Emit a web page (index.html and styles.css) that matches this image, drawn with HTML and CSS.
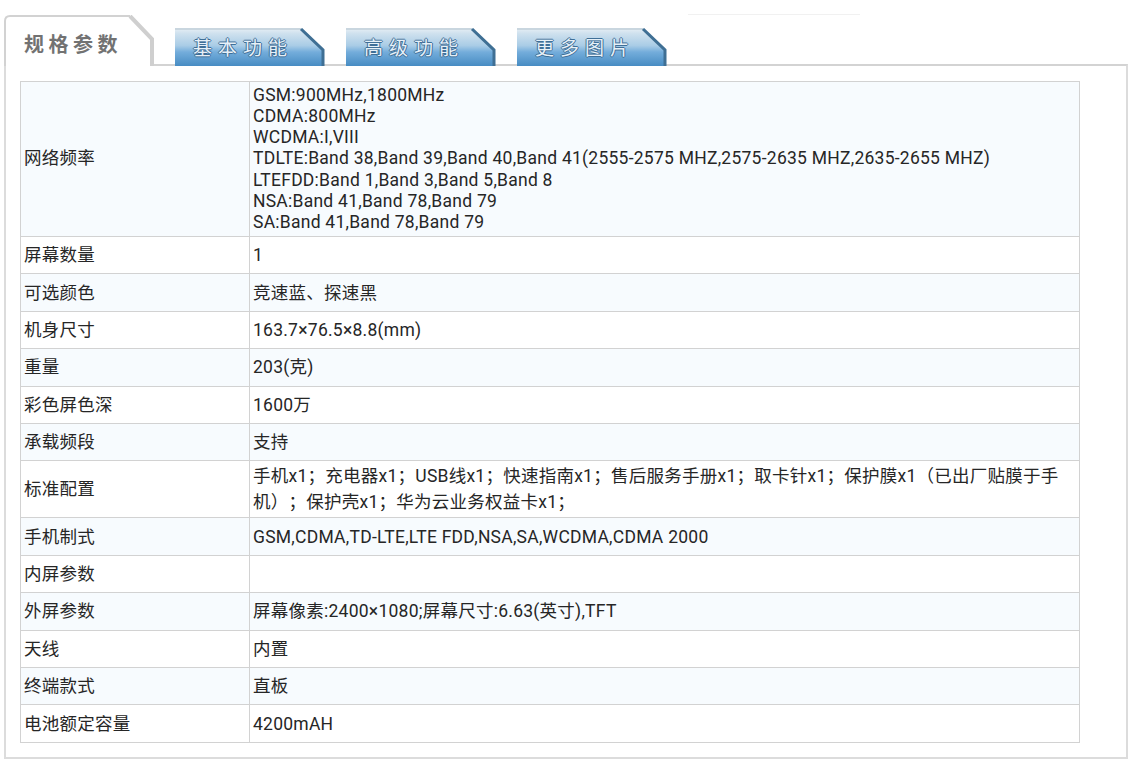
FILE: index.html
```html
<!DOCTYPE html>
<html lang="zh-CN">
<head>
<meta charset="utf-8">
<title>规格参数</title>
<link rel="stylesheet" href="styles.css">
</head>
<body>
<div class="wrap">
  <div class="tabs">
    <div class="tab tab-active">
      <svg class="tab-bg" width="151" height="51" viewBox="0 0 151 51">
        <path d="M1,51 L1,6 Q1,1 6,1 L126,1 L149,25 L149,51 Z" fill="#fff"/>
        <path d="M1,51 L1,6 Q1,1 6,1 L126,1" fill="none" stroke="#d2d2d2" stroke-width="2"/>
        <path d="M126,1 L148,24 L148,51" fill="none" stroke="#cfcfcf" stroke-width="4"/>
      </svg>
      <span class="tab-label">规格参数</span>
    </div>
    <div class="tab">
      <svg class="tab-bg" width="151" height="38" viewBox="0 0 151 38">
        <defs>
          <linearGradient id="tg1" x1="0" y1="0" x2="0" y2="1">
            <stop offset="0" stop-color="#e3edf4"/>
            <stop offset="0.12" stop-color="#cfe1ee"/>
            <stop offset="0.45" stop-color="#a9cce6"/>
            <stop offset="0.62" stop-color="#74addb"/>
            <stop offset="1" stop-color="#478cc3"/>
          </linearGradient>
        </defs>
        <path d="M0,38 L0,1 L126,1 L149,23 L149,38 Z" fill="url(#tg1)"/>
        <path d="M0,1 L126,1" stroke="#c9d6df" stroke-width="2"/>
        <path d="M126,1 L148,22 L148,38" fill="none" stroke="#3f6f94" stroke-width="3"/>
      </svg>
      <span class="tab-label">基本功能</span>
    </div>
    <div class="tab">
      <svg class="tab-bg" width="151" height="38" viewBox="0 0 151 38">
        <path d="M0,38 L0,1 L126,1 L149,23 L149,38 Z" fill="url(#tg1)"/>
        <path d="M0,1 L126,1" stroke="#c9d6df" stroke-width="2"/>
        <path d="M126,1 L148,22 L148,38" fill="none" stroke="#3f6f94" stroke-width="3"/>
      </svg>
      <span class="tab-label">高级功能</span>
    </div>
    <div class="tab">
      <svg class="tab-bg" width="151" height="38" viewBox="0 0 151 38">
        <path d="M0,38 L0,1 L126,1 L149,23 L149,38 Z" fill="url(#tg1)"/>
        <path d="M0,1 L126,1" stroke="#c9d6df" stroke-width="2"/>
        <path d="M126,1 L148,22 L148,38" fill="none" stroke="#3f6f94" stroke-width="3"/>
      </svg>
      <span class="tab-label">更多图片</span>
    </div>
    <div class="topline"></div>
  </div>
  <div class="panel">
    <table class="spec">
      <colgroup><col class="col-name"><col class="col-val"></colgroup>
      <tr class="odd multi"><td>网络频率</td><td>GSM:900MHz,1800MHz<br>CDMA:800MHz<br>WCDMA:I,VIII<br>TDLTE:Band 38,Band 39,Band 40,Band 41(2555-2575 MHZ,2575-2635 MHZ,2635-2655 MHZ)<br>LTEFDD:Band 1,Band 3,Band 5,Band 8<br>NSA:Band 41,Band 78,Band 79<br>SA:Band 41,Band 78,Band 79</td></tr>
      <tr><td>屏幕数量</td><td>1</td></tr>
      <tr class="odd"><td>可选颜色</td><td>竞速蓝、探速黑</td></tr>
      <tr><td>机身尺寸</td><td>163.7×76.5×8.8(mm)</td></tr>
      <tr class="odd"><td>重量</td><td>203(克)</td></tr>
      <tr><td>彩色屏色深</td><td>1600万</td></tr>
      <tr class="odd"><td>承载频段</td><td>支持</td></tr>
      <tr class="double"><td>标准配置</td><td>手机x1；充电器x1；USB线x1；快速指南x1；售后服务手册x1；取卡针x1；保护膜x1（已出厂贴膜于手机）；保护壳x1；华为云业务权益卡x1；</td></tr>
      <tr class="odd"><td>手机制式</td><td>GSM,CDMA,TD-LTE,LTE FDD,NSA,SA,WCDMA,CDMA 2000</td></tr>
      <tr><td>内屏参数</td><td></td></tr>
      <tr class="odd"><td>外屏参数</td><td>屏幕像素:2400×1080;屏幕尺寸:6.63(英寸),TFT</td></tr>
      <tr><td>天线</td><td>内置</td></tr>
      <tr class="odd"><td>终端款式</td><td>直板</td></tr>
      <tr><td>电池额定容量</td><td>4200mAH</td></tr>
    </table>
  </div>
</div>
</body>
</html>
```
FILE: styles.css
```css
html, body {
  margin: 0;
  padding: 0;
  background: #ffffff;
}

.wrap {
  margin: 15px 0 0 4px;
  width: 1124px;
}

.tabs {
  display: flex;
  align-items: flex-end;
  gap: 20px;
  height: 51px;
  margin-bottom: -2px;
  position: relative;
  z-index: 1;
}

.tab {
  position: relative;
  width: 151px;
  height: 38px;
  display: flex;
  align-items: center;
  padding-left: 18px;
  box-sizing: border-box;
}

.tab-active {
  height: 51px;
  padding-left: 20px;
  padding-top: 6px;
}

.tab-bg {
  position: absolute;
  left: 0;
  top: 0;
}

.tab-label {
  position: relative;
  font-family: "Noto Sans CJK SC", sans-serif;
  font-size: 19px;
  letter-spacing: 6px;
  color: #e6f0f8;
  text-shadow: 1px 0 0 #3f6f97, -1px 0 0 #3f6f97, 0 1px 0 #3f6f97, 0 -1px 0 #3f6f97;
  line-height: 24px;
}

.tab-active .tab-label {
  font-size: 20px;
  letter-spacing: 4.5px;
  font-weight: 700;
  color: #727272;
  text-shadow: none;
}

.topline {
  align-self: flex-start;
  margin-top: -1px;
  width: 172px;
  border-top: 1px solid #f1f1f1;
}

.panel {
  border: 2px solid #dcdcdc;
  border-top-color: #d3d3d3;
  padding: 15px 0 14px 14px;
}

.spec {
  width: 1060px;
  border-collapse: collapse;
  table-layout: fixed;
  font-family: "Roboto", "Noto Sans CJK SC", sans-serif;
  font-size: 17.5px;
  letter-spacing: 0.25px;
  color: #262626;
  text-spacing-trim: space-all;
}

.col-name {
  width: 229px;
}

.spec td {
  border: 1px solid #d2d2d2;
  height: 37.4px;
  padding: 0 3px;
  line-height: 24px;
  vertical-align: middle;
  box-sizing: border-box;
}

.spec tr.odd td {
  background: #f7fbfe;
}

.spec tr.multi td {
  line-height: 21.3px;
  padding-top: 2.5px;
  padding-bottom: 2.5px;
}

.spec tr.double td {
  line-height: 26.5px;
  padding-top: 1.5px;
  padding-bottom: 1.5px;
}
```
